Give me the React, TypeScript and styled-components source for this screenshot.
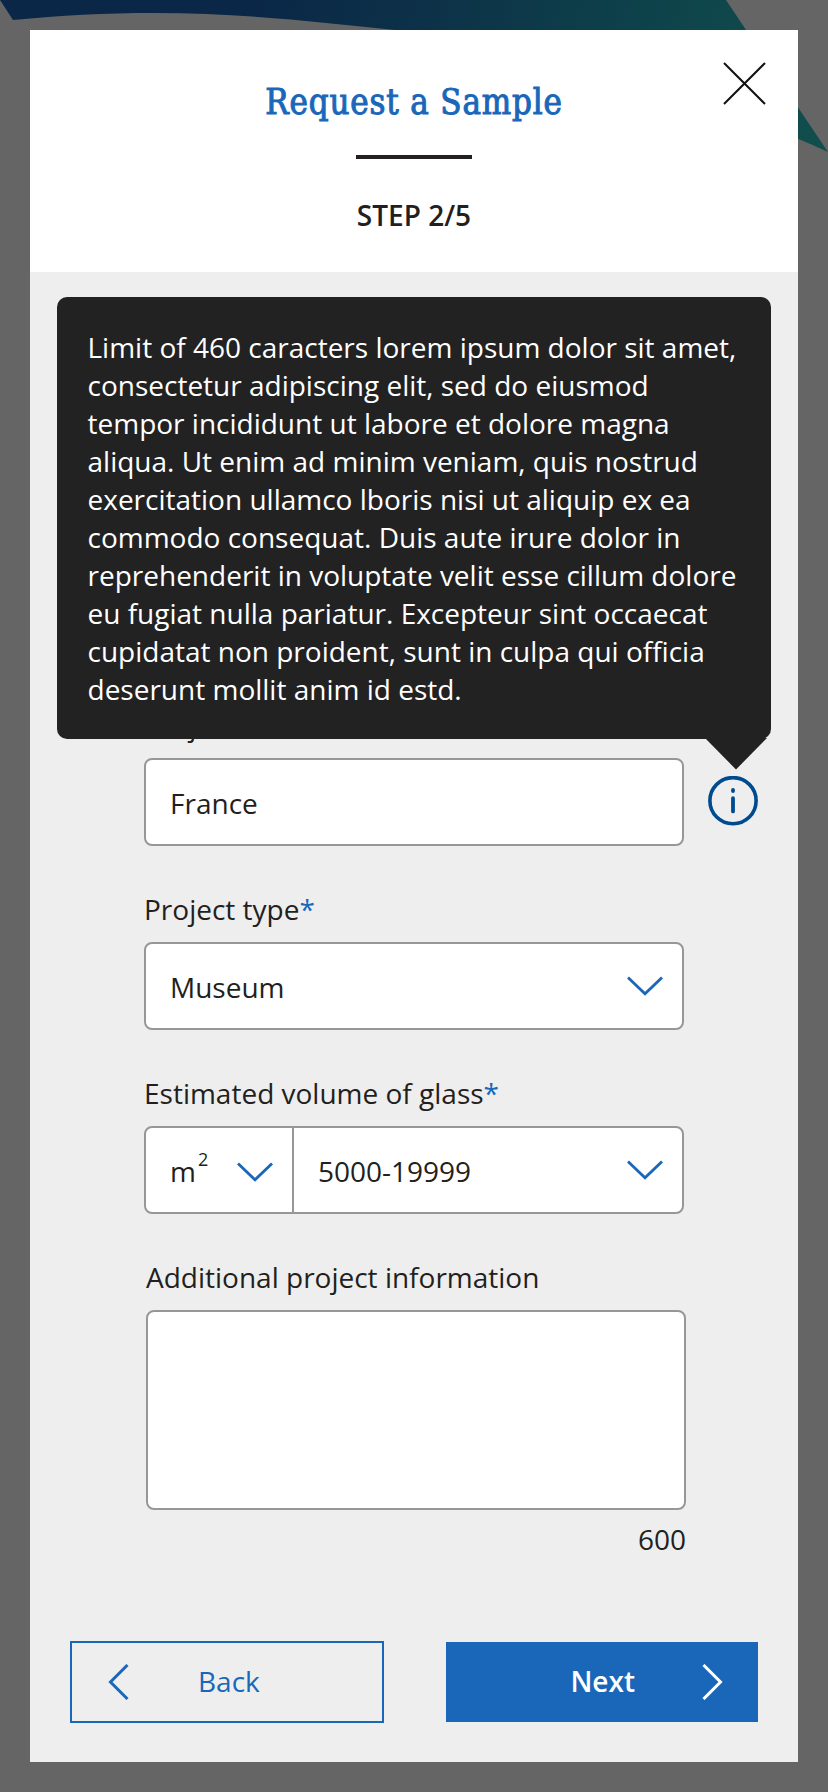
import React from "react";
import styled, { createGlobalStyle } from "styled-components";

const blue = "#1a67b9";
const ink = "#231f20";

const GlobalStyle = createGlobalStyle`
  *, *::before, *::after { box-sizing: border-box; }
  body {
    margin: 0;
    background: #656565;
    color: ${ink};
    font: 400 28px/38px "Open Sans", sans-serif;
  }
  svg { display: block; flex: none; }
`;

const Page = styled.div`
  position: relative;
  display: flex;
  width: 828px;
  height: 1792px;
  padding: 30px;
  overflow: hidden;
`;

const Backdrop = styled.svg`
  position: absolute;
  top: 0;
  left: 0;
`;

const Modal = styled.section`
  position: relative;
  flex: 1;
  min-width: 0;
  display: flex;
  flex-direction: column;
  background: #eee;
`;

const Header = styled.header`
  position: relative;
  display: flex;
  flex-direction: column;
  align-items: center;
  height: 242px;
  padding-top: 48px;
  background: #fff;
`;

const Title = styled.h1`
  margin: 0;
  color: ${blue};
  font: 400 34.5px/48px "DejaVu Serif Condensed", "DejaVu Serif", serif;
  font-stretch: condensed;
  letter-spacing: 0.85px;
  -webkit-text-stroke: 1px ${blue};
  white-space: nowrap;
`;

const Rule = styled.div`
  width: 116px;
  height: 4px;
  margin: 29px 0 37px;
  background: ${ink};
`;

const Step = styled.div`
  font-weight: 600;
  white-space: nowrap;
`;

const CloseButton = styled.button`
  position: absolute;
  top: 32px;
  right: 32px;
  padding: 0;
  border: 0;
  background: none;
`;

const Form = styled.div`
  display: flex;
  flex-direction: column;
  gap: 44px;
  padding: 434px 112px 0 114px;
`;

const Field = styled.div<{ $shift?: number }>`
  display: flex;
  flex-direction: column;
  gap: 14px;
  width: 540px;
  margin-left: ${(p) => p.$shift ?? 0}px;
`;

const Label = styled.label`
  height: 38px;
  white-space: nowrap;
`;

const Required = styled.span`
  color: ${blue};
`;

const InputRow = styled.div`
  display: flex;
  align-items: center;
  gap: 24px;
`;

const Control = styled.div`
  flex: none;
  display: flex;
  width: 540px;
  height: 88px;
  border: 2px solid #979797;
  border-radius: 8px;
  background: #fff;
`;

const Segment = styled.div<{ $width?: number }>`
  display: flex;
  align-items: center;
  justify-content: space-between;
  flex: ${(p) => (p.$width ? `0 0 ${p.$width}px` : "1")};
  padding: 0 19px 0 24px;
  & + & { border-left: 2px solid #979797; }
`;

const Value = styled.span`
  padding-top: 2px;
  white-space: nowrap;
`;

const Exponent = styled.sup`
  margin-left: 2px;
  font-size: 18px;
  line-height: 0;
  vertical-align: 16px;
`;

const ChevronBox = styled.span<{ $drop?: number }>`
  padding-top: ${(p) => p.$drop ?? 0}px;
`;

const TextArea = styled(Control)`
  height: 200px;
`;

const Counter = styled.div`
  margin-top: -4px;
  text-align: right;
`;

const Actions = styled.footer`
  display: flex;
  align-items: center;
  justify-content: space-between;
  margin: 83px 40px 0 39.5px;
`;

const Button = styled.button<{ $primary?: boolean }>`
  display: flex;
  align-items: center;
  justify-content: ${(p) => (p.$primary ? "flex-end" : "flex-start")};
  gap: ${(p) => (p.$primary ? 67 : 69.5)}px;
  width: ${(p) => (p.$primary ? 312 : 314.5)}px;
  height: ${(p) => (p.$primary ? 80 : 82)}px;
  padding: 0 35px 0 36px;
  border: ${(p) => (p.$primary ? "0" : `2px solid ${blue}`)};
  background: ${(p) => (p.$primary ? blue : "transparent")};
  color: ${(p) => (p.$primary ? "#fff" : blue)};
  font: inherit;
  font-weight: ${(p) => (p.$primary ? 600 : 400)};
`;

const ButtonText = styled.span`
  padding-bottom: 2px;
`;

const Tooltip = styled.div`
  position: absolute;
  top: 267px;
  left: 27px;
  width: 714px;
  height: 442px;
  padding: 31px 30px 31px 30.5px;
  border-radius: 10px;
  background: #222;
  color: #fff;
  white-space: pre;
`;

const TooltipArrow = styled.svg`
  position: absolute;
  top: 441px;
  left: 648px;
`;

const tooltipText = [
  "Limit of 460 caracters lorem ipsum dolor sit amet,",
  "consectetur adipiscing elit, sed do eiusmod",
  "tempor incididunt ut labore et dolore magna",
  "aliqua. Ut enim ad minim veniam, quis nostrud",
  "exercitation ullamco lboris nisi ut aliquip ex ea",
  "commodo consequat. Duis aute irure dolor in",
  "reprehenderit in voluptate velit esse cillum dolore",
  "eu fugiat nulla pariatur. Excepteur sint occaecat",
  "cupidatat non proident, sunt in culpa qui officia",
  "deserunt mollit anim id estd.",
].join("\n");

const ChevronDown = () => (
  <svg width="36" height="20" viewBox="0 0 36 20" fill="none" stroke={blue} strokeWidth="2.8">
    <path d="M1 1.5 18 17.8 35 1.5" />
  </svg>
);

const ChevronSide = ({ right }: { right?: boolean }) => (
  <svg width="21" height="36" viewBox="0 0 21 36" fill="none" stroke="currentColor" strokeWidth="3">
    <path d={right ? "M1.5 1 18.5 18 1.5 35" : "M19.5 1 2.5 18 19.5 35"} />
  </svg>
);

const InfoIcon = () => (
  <svg width="50" height="52" viewBox="0 0 50 52" fill="none" stroke="#004a8f">
    <circle cx="25" cy="24.7" r="23.1" strokeWidth="3.6" />
    <path d="M25 13.8v1.2M25 22.2v13.2" strokeWidth="3.8" strokeLinecap="round" />
  </svg>
);

export default function App() {
  return (
    <Page>
      <GlobalStyle />
      <Backdrop width="828" height="160" viewBox="0 0 828 160">
        <defs>
          <linearGradient id="sweep" gradientUnits="userSpaceOnUse" x1="0" y1="0" x2="828" y2="100">
            <stop offset="0.3" stopColor="#0a2747" />
            <stop offset="0.5" stopColor="#0d3148" />
            <stop offset="0.72" stopColor="#0d3f4a" />
            <stop offset="1" stopColor="#114e4c" />
          </linearGradient>
        </defs>
        <path
          d="M0 0 13 20C60 15.5 105 13 155 13 240 13 320 22 395 30 560 50 690 90 828 152L726 0Z"
          fill="url(#sweep)"
        />
      </Backdrop>
      <Modal>
        <Header>
          <Title>Request a Sample</Title>
          <Rule />
          <Step>STEP 2/5</Step>
          <CloseButton aria-label="Close">
            <svg width="43" height="43" viewBox="0 0 43 43" stroke="#111" strokeWidth="2">
              <path d="M1 1 42 42M42 1 1 42" />
            </svg>
          </CloseButton>
        </Header>
        <Form>
          <Field>
            <Label>Project location<Required>*</Required></Label>
            <InputRow>
              <Control>
                <Segment><Value>France</Value></Segment>
              </Control>
              <InfoIcon />
            </InputRow>
          </Field>
          <Field>
            <Label>Project type<Required>*</Required></Label>
            <Control>
              <Segment>
                <Value>Museum</Value>
                <ChevronDown />
              </Segment>
            </Control>
          </Field>
          <Field>
            <Label>Estimated volume of glass<Required>*</Required></Label>
            <Control>
              <Segment $width={146}>
                <Value>m<Exponent>2</Exponent></Value>
                <ChevronBox $drop={4}><ChevronDown /></ChevronBox>
              </Segment>
              <Segment>
                <Value>5000-19999</Value>
                <ChevronDown />
              </Segment>
            </Control>
          </Field>
          <Field $shift={2}>
            <Label>Additional project information</Label>
            <TextArea />
            <Counter>600</Counter>
          </Field>
        </Form>
        <Actions>
          <Button>
            <ChevronSide />
            <ButtonText>Back</ButtonText>
          </Button>
          <Button $primary>
            <ButtonText>Next</ButtonText>
            <ChevronSide right />
          </Button>
        </Actions>
        <Tooltip role="tooltip">
          {tooltipText}
          <TooltipArrow width="62" height="32" viewBox="0 0 62 32">
            <path d="M0 0H62L31 31.5Z" fill="#222" />
          </TooltipArrow>
        </Tooltip>
      </Modal>
    </Page>
  );
}
